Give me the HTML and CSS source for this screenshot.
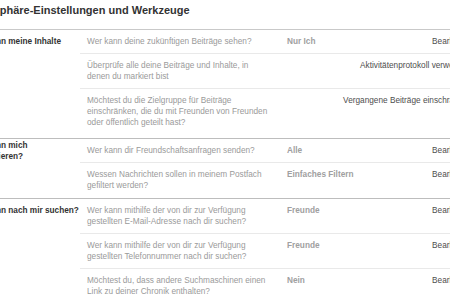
FILE: index.html
```html
<!DOCTYPE html>
<html lang="de">
<head>
<meta charset="utf-8">
<title>Privatsphäre-Einstellungen und Werkzeuge</title>
<link rel="stylesheet" href="styles.css">
</head>
<body>
<div class="page">
  <h1 class="title">Privatsphäre-Einstellungen und Werkzeuge</h1>

  <section class="section">
    <div class="label-col"><div class="label">Wer kann meine Inhalte</div></div>
    <div class="rows">
      <div class="row">
        <div class="question">Wer kann deine zukünftigen Beiträge sehen?</div>
        <div class="value">Nur Ich</div>
        <div class="edit">Bearbeiten</div>
      </div>
      <div class="row">
        <div class="question">Überprüfe alle deine Beiträge und Inhalte, in denen du markiert bist</div>
        <div class="action">Aktivitätenprotokoll verwenden</div>
      </div>
      <div class="row last tall">
        <div class="question">Möchtest du die Zielgruppe für Beiträge einschränken, die du mit Freunden von Freunden oder öffentlich geteilt hast?</div>
        <div class="action">Vergangene Beiträge einschränken</div>
      </div>
    </div>
  </section>

  <section class="section">
    <div class="label-col"><div class="label">Wer kann mich<br>kontaktieren?</div></div>
    <div class="rows">
      <div class="row">
        <div class="question">Wer kann dir Freundschaftsanfragen senden?</div>
        <div class="value">Alle</div>
        <div class="edit">Bearbeiten</div>
      </div>
      <div class="row last">
        <div class="question">Wessen Nachrichten sollen in meinem Postfach gefiltert werden?</div>
        <div class="value">Einfaches Filtern</div>
        <div class="edit">Bearbeiten</div>
      </div>
    </div>
  </section>

  <section class="section">
    <div class="label-col"><div class="label">Wer kann nach mir suchen?</div></div>
    <div class="rows">
      <div class="row">
        <div class="question">Wer kann mithilfe der von dir zur Verfügung gestellten E-Mail-Adresse nach dir suchen?</div>
        <div class="value">Freunde</div>
        <div class="edit">Bearbeiten</div>
      </div>
      <div class="row">
        <div class="question">Wer kann mithilfe der von dir zur Verfügung gestellten Telefonnummer nach dir suchen?</div>
        <div class="value">Freunde</div>
        <div class="edit">Bearbeiten</div>
      </div>
      <div class="row last">
        <div class="question">Möchtest du, dass andere Suchmaschinen einen Link zu deiner Chronik enthalten?</div>
        <div class="value">Nein</div>
        <div class="edit">Bearbeiten</div>
      </div>
    </div>
  </section>
</div>
</body>
</html>
```

FILE: styles.css
```css
html, body {
  margin: 0;
  padding: 0;
  overflow: hidden;
  background: #ffffff;
}

body {
  font-family: "Liberation Sans", Arial, sans-serif;
  color: #333333;
}

.page {
  width: 509px;
  margin-left: -37px;
}

.title {
  margin: 0;
  padding: 4px 0 12px 0;
  font-size: 11px;
  line-height: 13px;
  font-weight: bold;
  color: #333333;
  border-bottom: 1px solid #c9c9c9;
}

.section {
  display: flex;
  border-bottom: 1px solid #bdbdbd;
  padding-bottom: 1px;
}

.label-col {
  width: 117px;
  flex: none;
  height: 23px;
  display: flex;
  align-items: center;
}

.label {
  padding-left: 6px;
  font-size: 8.25px;
  line-height: 11px;
  font-weight: bold;
  color: #333333;
  white-space: nowrap;
}

.rows {
  flex: 1;
  display: flex;
  flex-direction: column;
}

.row {
  display: flex;
  align-items: flex-start;
  font-size: 8.25px;
  line-height: 11px;
  border-bottom: 1px solid #e9e9e9;
}

.row.last {
  border-bottom: none;
}

.row.tall {
  padding-bottom: 3px;
}

.question {
  width: 184px;
  flex: none;
  padding: 6px 16px 6px 7px;
  color: #9a9a9a;
}

.value {
  flex: 1;
  padding: 6px 0;
  font-weight: bold;
  color: #a0a0a0;
}

.edit {
  flex: none;
  padding: 6px 0;
  text-align: right;
  color: #4e4e4e;
}

.action {
  flex: 1;
  padding: 6px 0;
  text-align: right;
  color: #4e4e4e;
}
```
